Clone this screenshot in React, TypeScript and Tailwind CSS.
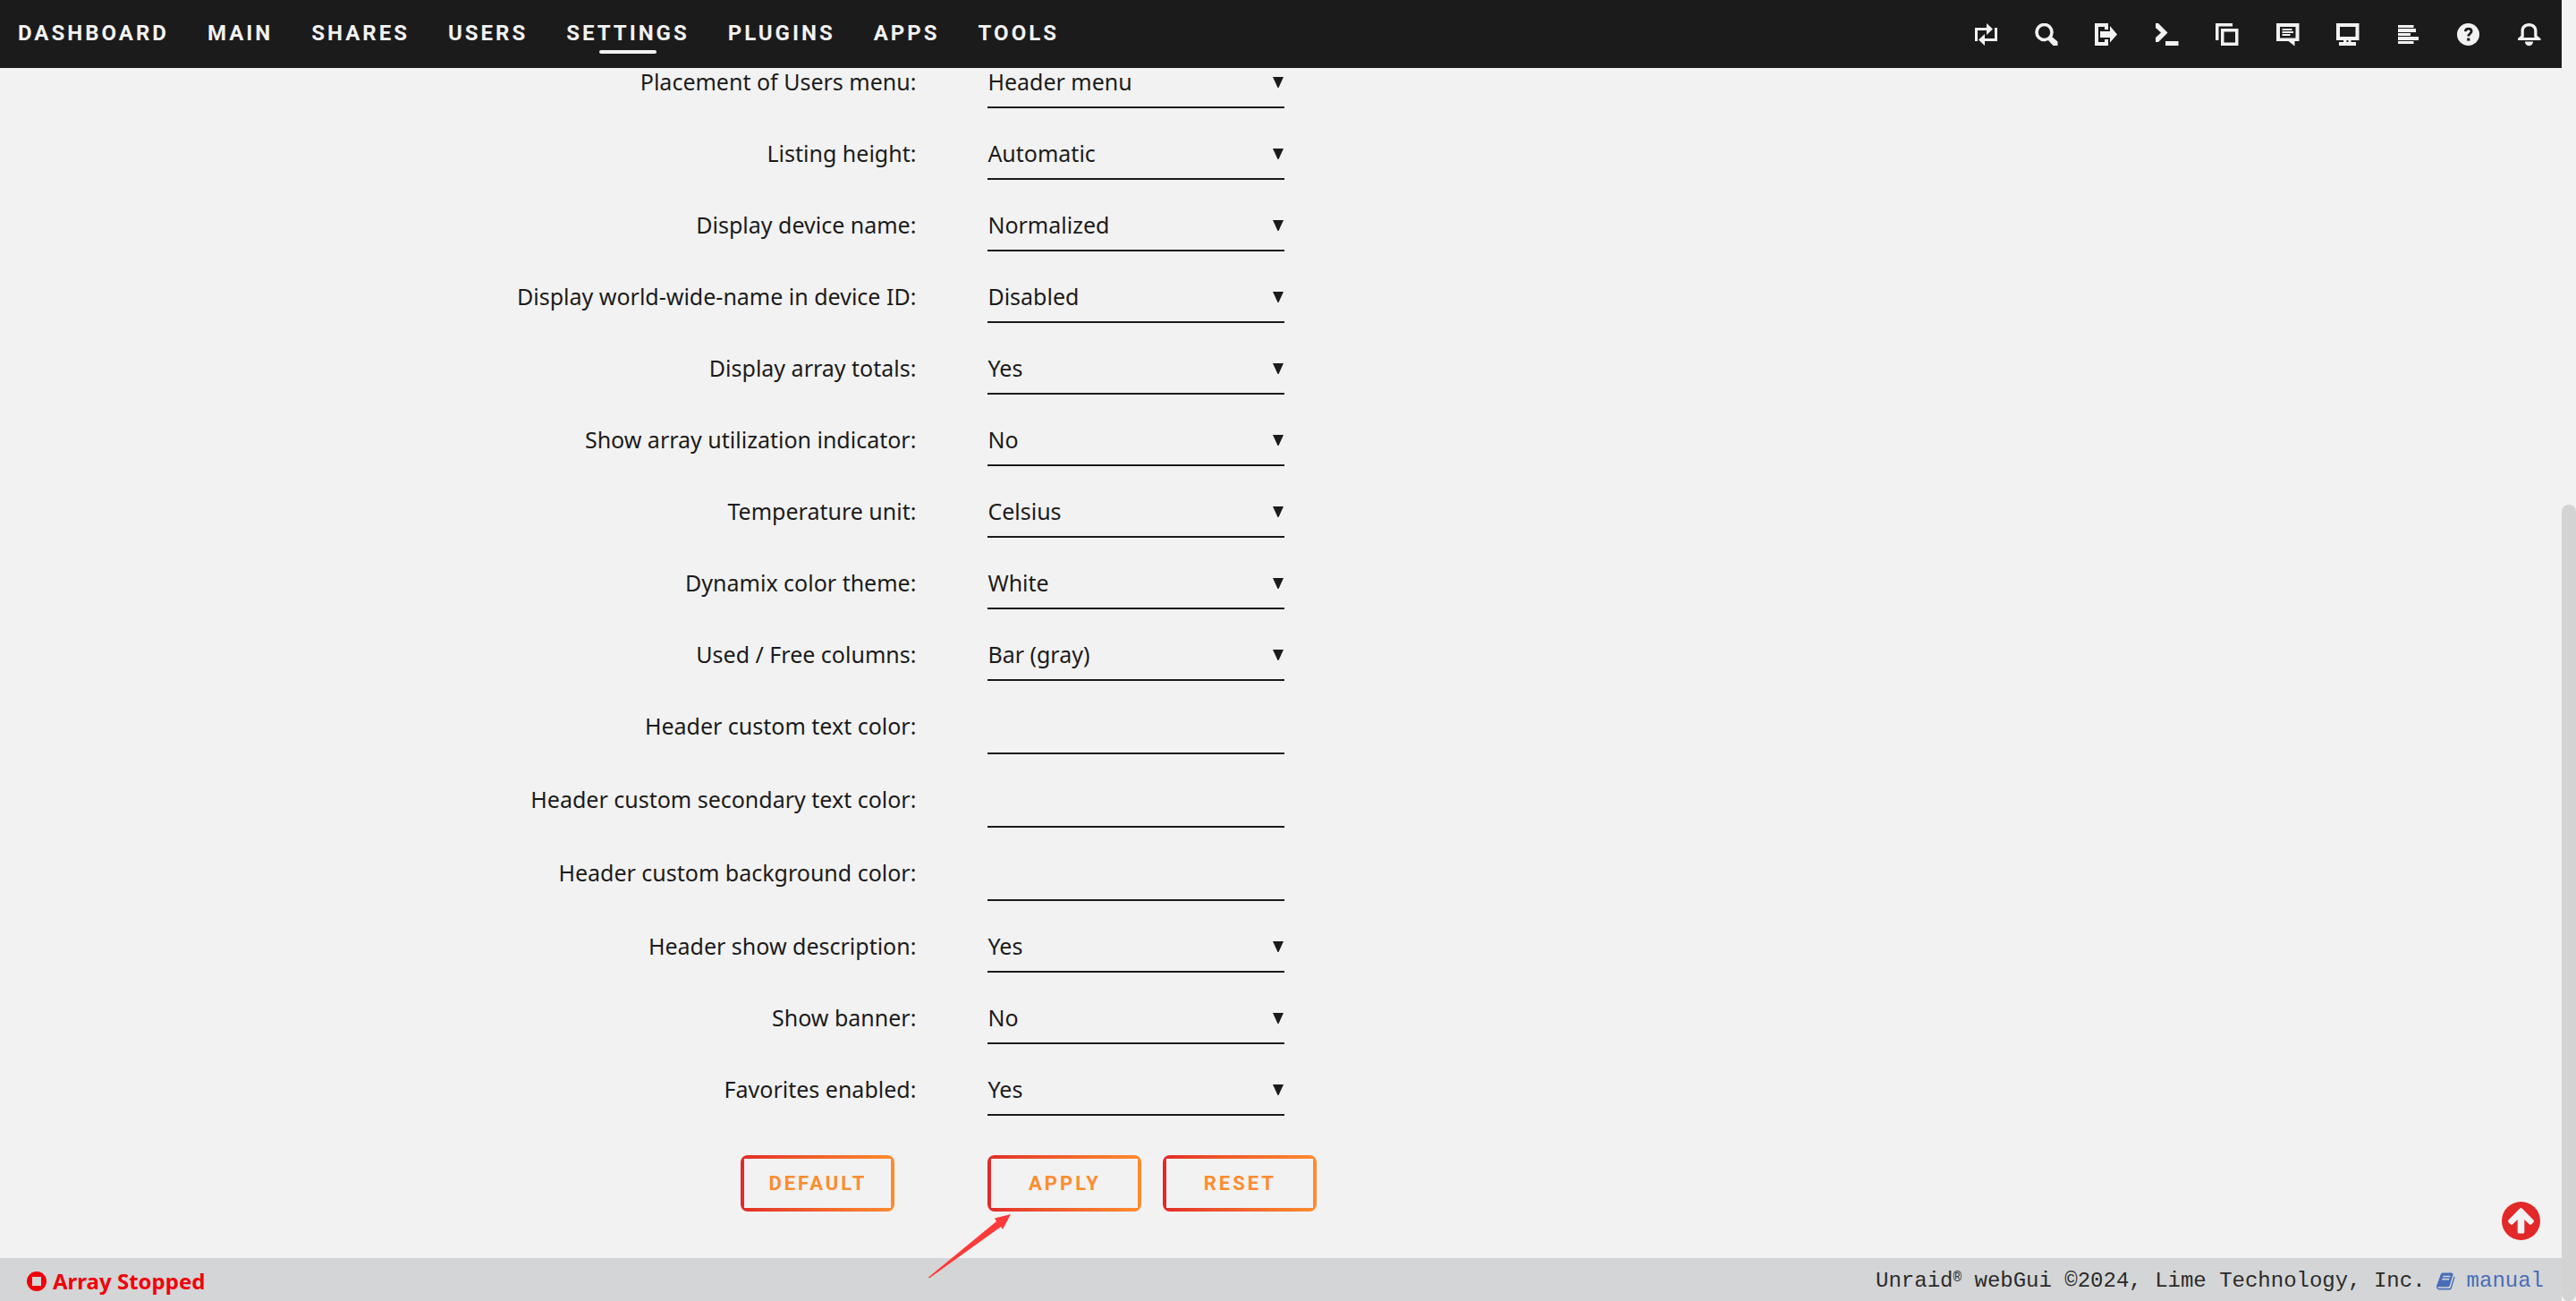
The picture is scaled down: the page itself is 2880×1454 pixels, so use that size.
import React from "react";

const NAV = ["DASHBOARD", "MAIN", "SHARES", "USERS", "SETTINGS", "PLUGINS", "APPS", "TOOLS"];

type Field = { label: string; value?: string; options?: string[] };

const FIELDS: Field[] = [
  { label: "Placement of Users menu:", value: "Header menu", options: ["Header menu", "Settings menu"] },
  { label: "Listing height:", value: "Automatic", options: ["Automatic", "Fixed"] },
  { label: "Display device name:", value: "Normalized", options: ["Normalized", "Raw"] },
  { label: "Display world-wide-name in device ID:", value: "Disabled", options: ["Disabled", "Automatic"] },
  { label: "Display array totals:", value: "Yes", options: ["Yes", "No"] },
  { label: "Show array utilization indicator:", value: "No", options: ["Yes", "No"] },
  { label: "Temperature unit:", value: "Celsius", options: ["Celsius", "Fahrenheit"] },
  { label: "Dynamix color theme:", value: "White", options: ["White", "Black", "Gray", "Azure"] },
  { label: "Used / Free columns:", value: "Bar (gray)", options: ["Text", "Bar (gray)", "Bar (color)"] },
  { label: "Header custom text color:" },
  { label: "Header custom secondary text color:" },
  { label: "Header custom background color:" },
  { label: "Header show description:", value: "Yes", options: ["Yes", "No"] },
  { label: "Show banner:", value: "No", options: ["Yes", "No"] },
  { label: "Favorites enabled:", value: "Yes", options: ["Yes", "No"] },
];

const TOOLS: { name: string; art: React.ReactNode }[] = [
  {
    name: "Switch language",
    art: (
      <path d="M1 20V5h13V0l7 6.500-7 6.500V8H4v12zM26 5v15H12v5l-7-6.500 7-6.500v5h11V5z" />
    ),
  },
  {
    name: "Search",
    art: (
      <>
        <circle cx="10.500" cy="10" r="8.500" fill="none" stroke="currentColor" strokeWidth="3.600" />
        <path d="M13.500 17.500l4.500-3.500 7.500 6.500V25h-5z" />
      </>
    ),
  },
  {
    name: "Logout",
    art: (
      <path d="M0 0h15v7h-4V4H4v17h7v-3h4v7H0zM6 9h11V3l8 9.500-8 9V16H6z" />
    ),
  },
  { name: "Terminal", art: <path d="M0 0h3l10.500 10.500L3 21H0v-5l6-5.500L0 5zM11 20h14.500v5H11z" /> },
  {
    name: "File manager",
    art: (
      <path fillRule="evenodd" d="M0 0h19v3.500H3.500V19H0zM6 6h19.500v19H6zM9.500 9.500v12H22v-12z" />
    ),
  },
  {
    name: "Feedback",
    art: (
      <path
        fillRule="evenodd"
        d="M0 0h25.500v20H20.500v5.500l-7-5.500H0zM4 4v12.500h17.500V4zM6.500 6h11v2h-11zM6.500 9h12.500v2H6.500zM6.500 12h9v2h-9z"
      />
    ),
  },
  {
    name: "System information",
    art: (
      <path fillRule="evenodd" d="M0 0h25.500v19H0zM4 4v11h17.500V4zM8 19h3.500v2h2v-2h3v2H22v4H3v-4h5z" />
    ),
  },
  {
    name: "Log",
    art: <path d="M1 2h17.500v3H1zM1 6h20v4H1zM1 11h14v3H1zM1 15h23v4H1zM1 20h17.500v3H1z" />,
  },
  {
    name: "Help",
    art: (
      <>
        <circle cx="12.500" cy="12.500" r="12.500" />
        <path
          d="M9.300 9.200C9.500 7 11 6.100 12.700 6.100c2 0 3.400 1.100 3.400 2.800 0 2.600-3.300 2.700-3.300 5.700"
          fill="none"
          stroke="#1c1b1b"
          strokeWidth="2.800"
        />
        <path d="M11.200 16.600h3.200v3h-3.200z" fill="#1c1b1b" />
      </>
    ),
  },
  {
    name: "Notifications",
    art: (
      <path
        fillRule="evenodd"
        d="M12.500 0c5.500 0 9 3.500 9 8.500V14l4 3v2H0v-2l3.500-3V8.500C3.500 3.500 7 0 12.500 0zM12.500 3.500c-3.500 0-5.700 2-5.700 5v6.700L6 16h13l-.8-.8V8.500c0-3-2.200-5-5.700-5zM8 20.500h9c0 2.600-2 4.700-4.500 4.700S8 23.100 8 20.500z"
      />
    ),
  },
];

function Header() {
  return (
    <header className="relative z-10 flex h-[76px] items-center justify-between bg-[#1c1b1b] text-[#f2f2f2]">
      <nav className="flex gap-[43px] pb-0.5 pl-5 font-['Roboto',sans-serif]">
        {NAV.map((item) => (
          <a key={item} href={`#${item.toLowerCase()}`} className="relative text-2xl leading-9 font-bold tracking-[3px]">
            {item}
            {item === "SETTINGS" && (
              <span className="absolute top-[37px] left-1/2 h-1 w-16 -translate-x-1/2 rounded-full bg-[#f2f2f2]" />
            )}
          </a>
        ))}
      </nav>
      <div className="mr-[23px] flex w-[634px] justify-between pt-0.5">
        {TOOLS.map((tool) => (
          <button key={tool.name} type="button" aria-label={tool.name}>
            <svg viewBox="0 0 26 26" className="size-[26px]" fill="currentColor" aria-hidden="true">
              {tool.art}
            </svg>
          </button>
        ))}
      </div>
    </header>
  );
}

function FieldRow({ field, id }: { field: Field; id: string }) {
  return (
    <div className="grid grid-cols-[35%_1fr] items-start gap-x-20 pt-8">
      <label htmlFor={id} className="text-right leading-9">
        {field.label}
      </label>
      <div className="relative w-[332px]">
        {field.options ? (
          <>
            <select
              id={id}
              defaultValue={field.value}
              className="block h-12 w-full appearance-none rounded-none border-b-2 border-[#1c1b1b] bg-transparent pb-2"
            >
              {field.options.map((option) => (
                <option key={option}>{option}</option>
              ))}
            </select>
            <svg
              viewBox="0 0 12 12"
              className="pointer-events-none absolute top-[13px] right-px size-3"
              fill="#1c1b1b"
              aria-hidden="true"
            >
              <path d="M0 0h12L6.500 12h-1z" />
            </svg>
          </>
        ) : (
          <input
            id={id}
            type="text"
            className="block h-[50px] w-full rounded-none border-b-2 border-[#1c1b1b] bg-transparent pb-2 outline-none"
          />
        )}
      </div>
    </div>
  );
}

function ActionButton({ children }: { children: React.ReactNode }) {
  return (
    <button type="button" className="h-[63px] w-[172px] rounded-lg bg-linear-to-r from-[#e22828] to-[#ff8c2f] p-1">
      <span className="flex h-full items-center justify-center bg-[#f2f2f2] font-['Roboto',sans-serif] text-[22px] font-bold tracking-[3px] text-[#ff8c2f]">
        {children}
      </span>
    </button>
  );
}

function Pointer() {
  return (
    <svg
      viewBox="0 0 92 72"
      className="pointer-events-none absolute top-[66px] -left-[66px] z-20 h-[72px] w-[92px]"
      fill="#ff3a3a"
      aria-hidden="true"
    >
      <path d="M92 0L83 17l-2-3L1 71.500 0 70.500 76 8l-2-3.500z" />
    </svg>
  );
}

function Footer() {
  return (
    <footer className="mt-auto flex h-12 items-center justify-between bg-[#d4d5d6] pt-1 pr-5 pl-[30px]">
      <p className="flex items-center gap-[7px] text-2xl font-bold text-[#f0000c]">
        <svg viewBox="0 0 22 22" className="size-[22px]" fill="currentColor" fillRule="evenodd" aria-hidden="true">
          <path d="M11 0a11 11 0 1 1 0 22a11 11 0 1 1 0-22zM6 6v10h10V6z" />
        </svg>
        Array Stopped
      </p>
      <p className="flex items-center gap-3 font-['Liberation_Mono',monospace] text-2xl text-[#2b2b2b]">
        <span>
          Unraid<span className="align-[6px] text-base leading-none">®</span> webGui ©2024, Lime Technology, Inc.
        </span>
        <a href="#manual" className="flex items-center gap-3 text-[#486dba]">
          <svg viewBox="0 0 1792 1792" className="size-[22px]" fill="currentColor" aria-hidden="true">
            <path d="M1639 478q40 57 18 129l-275 906q-19 64-76.500 107.500t-122.500 43.500h-923q-77 0-148.500-53.500t-99.500-131.500q-24-67-2-127 0-4 3-27t4-37q1-8-3-21.500t-3-19.500q2-11 8-21t16.500-23.500 16.500-23.500q23-38 45-91.500t30-91.500q3-10 .5-30t-.5-28q3-11 17-28t17-23q21-36 42-92t25-90q1-9-2.500-32t.5-28q4-13 22-30.500t22-22.500q19-26 42.500-84.500t27.500-96.500q1-8-3-25.500t-2-26.500q2-8 9-18t18-23 17-21q8-12 16.500-30.500t15-35 16-36 19.500-32 26.500-23.500 36-11.500 47.500 5.500l-1 3q38-9 51-9h761q74 0 114 56t18 130l-274 906q-36 119-71.500 153.500t-128.500 34.500h-869q-27 0-38 15-11 16-1 43 24 70 144 70h923q29 0 56-15.500t35-41.500l300-987q7-22 5-57 38 15 59 43zm-1064 2q-4 13 2 22.500t20 9.500h608q13 0 25.500-9.500t16.500-22.500l21-64q4-13-2-22.500t-20-9.500h-608q-13 0-25.500 9.500t-16.500 22.500zm-83 256q-4 13 2 22.500t20 9.500h608q13 0 25.500-9.500t16.500-22.500l21-64q4-13-2-22.500t-20-9.500h-608q-13 0-25.500 9.500t-16.500 22.500z" />
          </svg>
          manual
        </a>
      </p>
    </footer>
  );
}

export default function App() {
  return (
    <div className="flex min-h-screen bg-[#f2f2f2] font-['Noto_Sans',sans-serif] text-[25px] text-[#1c1b1b]">
      <div className="flex flex-1 flex-col">
        <Header />
        <main className="-mt-[35px] pr-1 pb-[52px] pl-9">
          <form onSubmit={(event) => event.preventDefault()}>
            {FIELDS.map((field, index) => (
              <FieldRow key={field.label} field={field} id={`field-${index}`} />
            ))}
            <div className="grid grid-cols-[35%_1fr] gap-x-20 pt-11">
              <div className="flex justify-end pr-6">
                <ActionButton>DEFAULT</ActionButton>
              </div>
              <div className="relative flex gap-6">
                <ActionButton>APPLY</ActionButton>
                <ActionButton>RESET</ActionButton>
                <Pointer />
              </div>
            </div>
          </form>
        </main>
        <Footer />
      </div>
      <div className="flex w-4 flex-col bg-[#f2f2f2] pt-[564px]" aria-hidden="true">
        <div className="flex-1 rounded-full bg-[#d3d3d3]" />
      </div>
      <button type="button" aria-label="Back to top" className="fixed right-10 bottom-[68px] z-10">
        <svg viewBox="0 0 43 43" className="size-[43px]" aria-hidden="true">
          <circle cx="21.500" cy="21.500" r="21.500" fill="#e22828" />
          <path
            d="M20.300 7.600a1.800 1.800 0 0 1 2.400 0L35.500 20.500a1.800 1.800 0 0 1 0 2.400l-2.300 2.300a1.800 1.800 0 0 1-2.400 0L25.300 20v14a1.600 1.600 0 0 1-1.600 1.600h-4.400a1.600 1.600 0 0 1-1.600-1.600V20l-5.500 5.200a1.800 1.800 0 0 1-2.400 0l-2.300-2.300a1.800 1.800 0 0 1 0-2.400z"
            fill="#f2f2f2"
          />
        </svg>
      </button>
    </div>
  );
}
